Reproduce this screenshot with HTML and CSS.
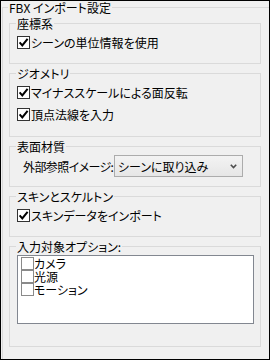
FILE: index.html
```html
<!DOCTYPE html>
<html lang="ja">
<head>
<meta charset="utf-8">
<link rel="stylesheet" href="styles.css">
</head>
<body>
<div class="window">
  <fieldset class="outer">
    <legend class="outer-title">FBX インポート設定</legend>

    <fieldset class="group g-coord">
      <legend>座標系</legend>
      <div class="check">
        <span class="box on"><svg viewBox="0 0 11 11" width="11" height="11"><polyline points="1.6,5.4 4.3,8.4 9.6,1.8" /></svg></span>
        <span class="lbl">シーンの単位情報を使用</span>
      </div>
    </fieldset>

    <fieldset class="group g-geo">
      <legend>ジオメトリ</legend>
      <div class="check">
        <span class="box on"><svg viewBox="0 0 11 11" width="11" height="11"><polyline points="1.6,5.4 4.3,8.4 9.6,1.8" /></svg></span>
        <span class="lbl">マイナススケールによる面反転</span>
      </div>
      <div class="check next">
        <span class="box on"><svg viewBox="0 0 11 11" width="11" height="11"><polyline points="1.6,5.4 4.3,8.4 9.6,1.8" /></svg></span>
        <span class="lbl">頂点法線を入力</span>
      </div>
    </fieldset>

    <fieldset class="group g-mat">
      <legend>表面材質</legend>
      <div class="field">
        <span class="field-label">外部参照イメージ:</span>
        <div class="select">
          <span>シーンに取り込み</span>
          <svg class="arrow" viewBox="0 0 7 5" width="7" height="5"><polyline points="0.8,0.8 3.5,3.6 6.2,0.8" /></svg>
        </div>
      </div>
    </fieldset>

    <fieldset class="group g-skin">
      <legend>スキンとスケルトン</legend>
      <div class="check">
        <span class="box on"><svg viewBox="0 0 11 11" width="11" height="11"><polyline points="1.6,5.4 4.3,8.4 9.6,1.8" /></svg></span>
        <span class="lbl">スキンデータをインポート</span>
      </div>
    </fieldset>

    <fieldset class="group g-opt">
      <legend>入力対象オプション:</legend>
      <div class="listbox">
        <div class="item"><span class="ibox"></span><span class="itext">カメラ</span></div>
        <div class="item"><span class="ibox"></span><span class="itext">光源</span></div>
        <div class="item"><span class="ibox"></span><span class="itext">モーション</span></div>
      </div>
    </fieldset>
  </fieldset>
</div>
</body>
</html>
```

FILE: styles.css
```css
* {
  box-sizing: border-box;
}

body {
  margin: 0;
  font-family: "Noto Sans CJK JP", "Noto Sans", sans-serif;
  font-size: 12px;
  font-feature-settings: "palt";
  color: #000;
}

.window {
  width: 270px;
  height: 360px;
  border: 1px solid #000;
  background: #f0f0f0;
  overflow: hidden;
}

fieldset {
  margin: 0;
  border: 1px solid #dadada;
  min-width: 0;
}

legend {
  padding: 0 1px;
  height: 13px;
  line-height: 13px;
}

.outer {
  margin-left: 1px;
  width: 290px;
  height: 400px;
  padding: 3px 0 0 5px;
}

.group {
  margin-left: 1px;
  width: 252px;
  padding: 6px 0 14px 6px;
}

.group + .group {
  margin-top: 3px;
}

.g-geo {
  padding-bottom: 15px;
}

.g-mat {
  padding-top: 2px;
  padding-bottom: 9px;
}

.g-opt {
  padding-top: 2px;
  padding-bottom: 22px;
}

.check {
  display: flex;
  align-items: center;
  height: 13px;
  padding-left: 1px;
  line-height: 13px;
}

.check.next {
  margin-top: 9px;
}

.box {
  width: 13px;
  height: 13px;
  border: 1px solid #333;
  background: #fff;
  flex: none;
  display: flex;
}

.box polyline {
  fill: none;
  stroke: #000;
  stroke-width: 2;
}

.lbl {
  margin-left: 1px;
  white-space: nowrap;
}

.field {
  display: flex;
  align-items: center;
  height: 22px;
}

.field-label {
  flex: none;
  width: 98px;
  padding-left: 7px;
  white-space: nowrap;
  letter-spacing: -0.6px;
}

.select {
  flex: none;
  width: 129px;
  height: 22px;
  border: 1px solid #acacac;
  background: linear-gradient(#f3f3f3, #e6e6e6);
  display: flex;
  align-items: center;
  justify-content: space-between;
  padding: 0 5px 0 3px;
  line-height: 13px;
}

.arrow polyline {
  fill: none;
  stroke: #4d4d4d;
  stroke-width: 1.6;
}

.listbox {
  margin-left: 1px;
  width: 237px;
  height: 69px;
  border: 1px solid #828790;
  background: #fff;
  padding: 1px 0 0 3px;
}

.item {
  display: flex;
  align-items: center;
  height: 13px;
  line-height: 13px;
}

.itext {
  white-space: nowrap;
}

.ibox {
  width: 13px;
  height: 13px;
  border: 1px solid #8a8a8a;
  background: #fff;
  flex: none;
}
```
